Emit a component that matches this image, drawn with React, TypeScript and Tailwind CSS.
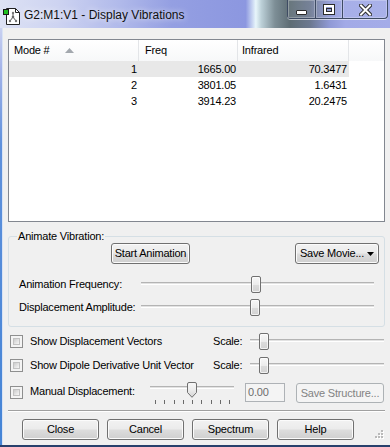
import React from "react";

const btn =
  "flex items-center justify-center rounded-[3px] border border-[#707070] bg-[linear-gradient(#f2f2f2_0%,#ebebeb_48%,#dddddd_52%,#cfcfcf_100%)] shadow-[inset_0_0_0_1px_#fbfbfb] text-black";

function Thumb({ left }: { left: number }) {
  return (
    <div
      className="absolute top-0 w-[10px] h-[17px] rounded-[2px] border border-[#707070] bg-[linear-gradient(#f7f7f7_0%,#ececec_50%,#dcdcdc_51%,#d2d2d2_100%)] shadow-[inset_0_0_0_1px_#ffffffb0]"
      style={{ left }}
    />
  );
}

function Slider({ thumb, className }: { thumb: number; className: string }) {
  return (
    <div className={`relative h-[17px] ${className}`}>
      <div className="absolute left-0 right-0 top-[6px] h-[3px] border-t border-[#b4b4b4] border-b border-b-white bg-[#e2e2e2]" />
      <Thumb left={thumb} />
    </div>
  );
}

function CheckBox() {
  return (
    <div className="w-[13px] h-[13px] shrink-0 border border-[#8e8f8f] bg-[#f4f4f4] p-[2px]">
      <div className="w-full h-full border border-[#c2c2c2] bg-[linear-gradient(135deg,#cbcbcb_0%,#e6e6e6_60%,#f6f6f6_100%)]" />
    </div>
  );
}

const rows: [string, string, string][] = [
  ["1", "1665.00", "70.3477"],
  ["2", "3801.05", "1.6431"],
  ["3", "3914.23", "20.2475"],
];

export default function App() {
  return (
    <div className="w-[390px] h-[447px] flex flex-col overflow-hidden font-['Liberation_Sans',Arial,sans-serif] text-black">
      {/* Title bar */}
      <div className="h-[28px] shrink-0 flex items-start bg-[linear-gradient(90deg,#dde2f4_0%,#cdd3f1_15%,#b0b9ea_31%,#949fe2_44%,#8c97e0_63%,#e8f6fb_65.6%,#bcd0d8_67%,#7d8e96_70.5%,#5d6c74_74.4%,#6b7890_79.5%,#909ad6_84.6%,#a2aae7_88.5%,#a4ace8_100%)]">
        <svg className="ml-[3px] mt-[8px]" width="17" height="17" viewBox="0 0 17 17">
          <path d="M3.5 0.5H12.5L16.5 4.5V16.5H3.5Z" fill="#fff" stroke="#222" />
          <path d="M12.5 0.5V4.5H16.5" fill="none" stroke="#222" />
          <line x1="10" y1="5" x2="10" y2="9" stroke="#555" />
          <line x1="10" y1="9" x2="7" y2="13" stroke="#555" />
          <line x1="10" y1="9" x2="13" y2="13" stroke="#555" />
          <circle cx="10" cy="5" r="1.2" fill="#777" />
          <circle cx="10" cy="9" r="1.3" fill="#666" />
          <circle cx="7" cy="13" r="1.2" fill="#777" />
          <circle cx="13" cy="13" r="1.2" fill="#777" />
          <rect x="0.5" y="1.5" width="5" height="5" fill="#20c020" stroke="#1a1a1a" />
        </svg>
        <div className="ml-[4px] mt-[7px] leading-[16px] text-[12px] text-[#101010] [text-shadow:0_0_6px_#ffffff]">
          G2:M1:V1 - Display Vibrations
        </div>
        <div className="ml-auto mr-[2px] flex h-[19px] rounded-b-[4px] border border-t-0 border-[#3e4b63] shadow-[0_1px_0_#ffffff90]">
          <div className="w-[28px] flex justify-center border-r border-[#3e4b63] bg-[#ffffff14] shadow-[inset_0_0_0_1px_#ffffff40]">
            <div className="mt-[10px] w-[11px] h-[5px] bg-white border border-[#2b2b2b] rounded-[1px]" />
          </div>
          <div className="w-[27px] flex justify-center border-r border-[#3e4b63] bg-[#ffffff14] shadow-[inset_0_0_0_1px_#ffffff40]">
            <svg className="mt-[4px]" width="12" height="11" viewBox="0 0 12 11">
              <rect x="0.5" y="0.5" width="11" height="10" fill="none" stroke="#2b2b2b" />
              <rect x="2" y="2" width="8" height="7" fill="none" stroke="#fff" strokeWidth="2" />
              <rect x="3.5" y="4.5" width="5" height="3" fill="none" stroke="#2b2b2b" />
            </svg>
          </div>
          <div className="w-[44px] flex justify-center rounded-br-[4px] bg-[#ffffff10] shadow-[inset_0_0_0_1px_#ffffff40]">
            <svg className="mt-[4px]" width="13" height="12" viewBox="0 0 13 12">
              <path d="M2 1.5L11 10.5M11 1.5L2 10.5" stroke="#2b2b2b" strokeWidth="4" strokeLinecap="square" />
              <path d="M2 1.5L11 10.5M11 1.5L2 10.5" stroke="#fff" strokeWidth="2" strokeLinecap="square" />
            </svg>
          </div>
        </div>
      </div>

      <div className="flex flex-1 min-h-0">
        <div className="w-[3px] shrink-0 border-r border-[#d8e3f5] bg-[linear-gradient(#c9d1f1_0%,#a3b3e9_10%,#5f91dc_28%,#4484d6_100%)]" />
        <div className="relative flex-1 flex flex-col bg-[#f0f0f0] pt-[11px] text-[11px] tracking-[-0.2px] leading-[13px]">
          {/* List view */}
          <div className="ml-[5px] w-[377px] h-[183px] shrink-0 border border-[#828790] bg-white flex flex-col">
            <div className="flex h-[21px] bg-[linear-gradient(#ffffff,#f7f8f9)]">
              <div className="w-[130px] flex items-center pl-[5px] border-r border-[#e3e5e8]">
                <span>Mode #</span>
                <svg className="ml-[15px]" width="9" height="5" viewBox="0 0 9 5">
                  <path d="M0 5L4.5 0L9 5Z" fill="#a3a8ae" />
                </svg>
              </div>
              <div className="w-[99px] flex items-center pl-[6px] border-r border-[#e3e5e8]">Freq</div>
              <div className="w-[111px] flex items-center pl-[4px] border-r border-[#e3e5e8]">Infrared</div>
              <div className="flex-1" />
            </div>
            {rows.map((r, i) => (
              <div key={r[0]} className="flex h-[16px]">
                <div className={`flex ${i === 0 ? "bg-[#e8e8e8]" : ""}`}>
                  <div className="w-[130px] text-right pr-[2px] leading-[16px]">{r[0]}</div>
                  <div className="w-[99px] text-right pr-[2px] leading-[16px]">{r[1]}</div>
                  <div className="w-[111px] text-right pr-[2px] leading-[16px]">{r[2]}</div>
                </div>
              </div>
            ))}
          </div>

          {/* Animate Vibration group */}
          <fieldset className="ml-[5px] mt-[8px] w-[377px] shrink-0 border border-[#d5dfe5] rounded-[3px] pb-[10px] flex flex-col">
            <legend className="ml-[8px] px-[1px] leading-[13px]">Animate Vibration:</legend>
            <div className="flex h-[21px]">
              <div className={`${btn} ml-[102px] w-[79px] h-[21px]`}>Start Animation</div>
              <div className={`${btn} ml-auto mr-[5px] w-[84px] h-[21px] gap-[3px]`}>
                <span>Save Movie...</span>
                <svg width="7" height="4" viewBox="0 0 7 4">
                  <path d="M0 0H7L3.5 4Z" fill="#000" />
                </svg>
              </div>
            </div>
            <div className="flex items-center h-[17px] mt-[12px]">
              <div className="w-[132px] pl-[10px]">Animation Frequency:</div>
              <Slider thumb={110} className="w-[233px]" />
            </div>
            <div className="flex items-center h-[17px] mt-[6px]">
              <div className="w-[132px] pl-[10px]">Displacement Amplitude:</div>
              <Slider thumb={109} className="w-[233px]" />
            </div>
          </fieldset>

          {/* Checkbox rows */}
          <div className="flex items-center h-[17px] mt-[6px] pl-[7px] pr-[6px]">
            <CheckBox />
            <div className="ml-[7px] w-[183px]">Show Displacement Vectors</div>
            <div className="w-[37px]">Scale:</div>
            <Slider thumb={9} className="flex-1" />
          </div>
          <div className="flex items-center h-[17px] mt-[7px] pl-[7px] pr-[6px]">
            <CheckBox />
            <div className="ml-[7px] w-[183px]">Show Dipole Derivative Unit Vector</div>
            <div className="w-[37px]">Scale:</div>
            <Slider thumb={9} className="flex-1" />
          </div>
          <div className="flex items-start h-[24px] mt-[8px] pl-[7px]">
            <div className="mt-[4px]">
              <CheckBox />
            </div>
            <div className="ml-[7px] mt-[3px] w-[120px]">Manual Displacement:</div>
            <div className="relative w-[84px] h-[24px]">
              <div className="absolute left-0 right-0 top-[4px] h-[3px] border-t border-[#b4b4b4] border-b border-b-white bg-[#e2e2e2]" />
              <svg className="absolute left-[37px] top-0" width="10" height="16" viewBox="0 0 10 16">
                <defs>
                  <linearGradient id="tg" x1="0" y1="0" x2="0" y2="1">
                    <stop offset="0" stopColor="#f8f8f8" />
                    <stop offset="0.5" stopColor="#ececec" />
                    <stop offset="1" stopColor="#d4d4d4" />
                  </linearGradient>
                </defs>
                <path d="M0.5 2Q0.5 0.5 2 0.5H8Q9.5 0.5 9.5 2V10.5L5 15.3L0.5 10.5Z" fill="url(#tg)" stroke="#707070" />
              </svg>
              <div className="absolute top-[18px] left-[5px] w-[75px] h-[5px] flex justify-between">
                {Array.from({ length: 9 }).map((_, i) => (
                  <div key={i} className="w-px h-[4px] bg-[#6a6a6a]" />
                ))}
              </div>
            </div>
            <div className="ml-[11px] mt-[1px] w-[40px] h-[19px] border border-[#aeb2b6] bg-[#f4f4f4] text-[#6d6d6d] pl-[2px] leading-[17px]">
              0.00
            </div>
            <div className="ml-[11px] mt-[1px] w-[88px] h-[20px] flex items-center justify-center rounded-[3px] border border-[#adb2b5] bg-[#f4f4f4] text-[#838383]">
              Save Structure...
            </div>
          </div>

          {/* Separator */}
          <div className="ml-[5px] mt-[4px] w-[377px] h-px bg-[#a0a0a0]" />
          <div className="ml-[5px] w-[377px] h-px bg-white" />

          {/* Bottom buttons */}
          <div className="flex gap-[8px] pl-[19px] mt-[7px]">
            <div className={`${btn} w-[77px] h-[21px]`}>Close</div>
            <div className={`${btn} w-[77px] h-[21px]`}>Cancel</div>
            <div className={`${btn} w-[77px] h-[21px]`}>Spectrum</div>
            <div className={`${btn} w-[77px] h-[21px]`}>Help</div>
          </div>

          {/* Size grip */}
          <svg className="absolute right-[6px] bottom-[6px]" width="9" height="9" viewBox="0 0 9 9">
            {[
              [6, 0],
              [3, 3],
              [6, 3],
              [0, 6],
              [3, 6],
              [6, 6],
            ].map(([x, y]) => (
              <g key={`${x}-${y}`}>
                <rect x={x + 1} y={y + 1} width="2" height="2" fill="#ffffff" />
                <rect x={x} y={y} width="2" height="2" fill="#b9b9b9" />
              </g>
            ))}
          </svg>
        </div>
      </div>
      <div className="h-[2px] shrink-0 bg-[#28406c]" />
    </div>
  );
}
